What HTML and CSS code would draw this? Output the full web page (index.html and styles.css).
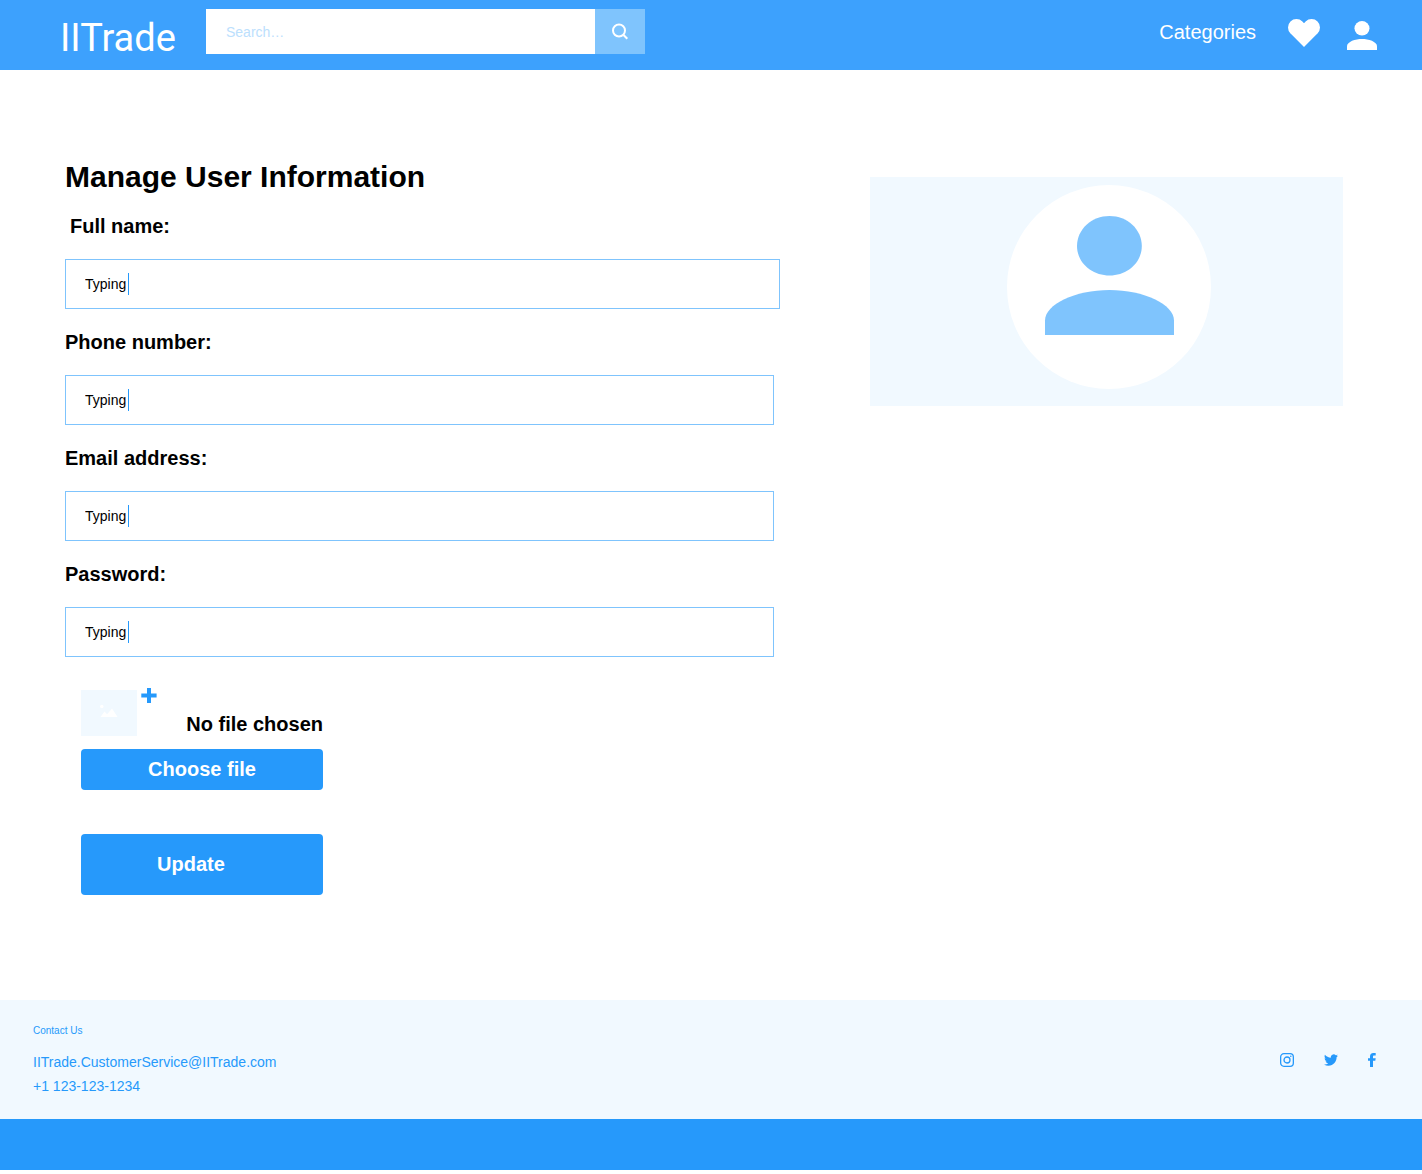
FILE: index.html
```html
<!DOCTYPE html>
<html lang="en">
<head>
<meta charset="utf-8">
<meta name="viewport" content="width=device-width, initial-scale=1">
<title>IITrade</title>
<link rel="stylesheet" href="styles.css">
</head>
<body>
<header class="topbar">
  <a class="logo" href="#">IITrade</a>
  <form class="search">
    <input class="search-input" type="search" placeholder="Search…" aria-label="Search">
    <button class="search-button" type="submit" aria-label="Search">
      <svg width="18" height="18" viewBox="0 0 18 18" fill="none" stroke="#fff" stroke-width="2"><circle cx="8" cy="7.500" r="6"/><path d="M12.300 11.800l4 4"/></svg>
    </button>
  </form>
  <nav class="nav">
    <a class="nav-link" href="#">Categories</a>
    <a class="nav-icon" href="#" aria-label="Favourites">
      <svg width="32" height="31" viewBox="1.55 0.98 20.9 20.25" fill="#fff"><path d="M20.84 4.61a5.5 5.5 0 0 0-7.78 0L12 5.67l-1.06-1.06a5.5 5.5 0 0 0-7.78 7.78l1.06 1.06L12 21.23l7.78-7.78 1.06-1.06a5.5 5.5 0 0 0 0-7.78z"/></svg>
    </a>
    <a class="nav-icon" href="#" aria-label="Account">
      <svg width="30" height="37" viewBox="0 -8 30 37" fill="#fff"><ellipse cx="15" cy="7.3" rx="7.5" ry="7.3"/><path d="M15 18C8.500 18 0 20.500 0 25.300V29h30v-3.700C30 20.500 21.500 18 15 18z"/></svg>
    </a>
  </nav>
</header>

<main class="page">
  <form class="profile">
    <h1 class="title">Manage User Information</h1>
    <div class="field field-wide">
      <label class="label" for="name">Full name:</label>
      <div class="control"><input class="input" id="name" type="text" value="Typing"><span class="caret"></span></div>
    </div>
    <div class="field">
      <label class="label" for="phone">Phone number:</label>
      <div class="control"><input class="input" id="phone" type="text" value="Typing"><span class="caret"></span></div>
    </div>
    <div class="field">
      <label class="label" for="email">Email address:</label>
      <div class="control"><input class="input" id="email" type="text" value="Typing"><span class="caret"></span></div>
    </div>
    <div class="field">
      <label class="label" for="password">Password:</label>
      <div class="control"><input class="input" id="password" type="text" value="Typing"><span class="caret"></span></div>
    </div>
    <div class="upload">
      <div class="upload-row">
        <div class="thumb">
          <svg width="18" height="18" viewBox="0 0 18 18" fill="#fff"><circle cx="1.800" cy="2.500" r="1.700"/><path d="M.5 13l4-5.500 2.600 2.700L12 4.600 17.600 13z"/></svg>
        </div>
        <svg class="plus" width="16" height="15" viewBox="0 0 16 15" fill="#2699fb"><path d="M6 0h4v5.500h5.600v4H10V15H6V9.500H.3v-4H6z"/></svg>
        <span class="file-name">No file chosen</span>
      </div>
      <button class="button" type="button">Choose file</button>
      <button class="button button-update" type="submit">Update</button>
    </div>
  </form>
  <aside class="avatar-card">
    <svg width="204" height="204" viewBox="0 0 204 204" role="img" aria-label="Profile picture"><circle cx="102" cy="102" r="102" fill="#fff"/><g fill="#7fc4fd"><path d="M102.500 31C120.300 31 134.800 44.300 134.800 61S120.300 90.500 102.500 90.500 70 77.700 70 61 84.700 31 102.500 31z"/><path d="M102.500 105C68 105 38 119.500 38 135.500V150h129v-14.500C167 119.500 137 105 102.500 105z"/></g></svg>
  </aside>
</main>

<footer class="footer">
  <div class="contact">
    <p class="contact-title">Contact Us</p>
    <a class="contact-link" href="#">IITrade.CustomerService@IITrade.com</a>
    <a class="contact-link" href="#">+1 123-123-1234</a>
  </div>
  <div class="social">
    <a class="social-link" href="#" aria-label="Instagram">
      <svg width="14" height="14" viewBox="0 0 14 14" fill="none" stroke="#2699fb" stroke-width="1.300"><rect x=".65" y=".65" width="12.700" height="12.700" rx="3.300"/><circle cx="7" cy="7" r="3"/><circle cx="10.800" cy="3.200" r=".8" fill="#2699fb" stroke="none"/></svg>
    </a>
    <a class="social-link" href="#" aria-label="Twitter">
      <svg width="14" height="14" viewBox="0 0 24 24" fill="#2699fb"><path d="M23.954 4.569a10 10 0 0 1-2.825.775 4.958 4.958 0 0 0 2.163-2.723 9.990 9.990 0 0 1-3.127 1.184 4.920 4.920 0 0 0-8.384 4.482C7.691 8.094 4.066 6.130 1.640 3.161a4.822 4.822 0 0 0-.666 2.475c0 1.710.87 3.213 2.188 4.096a4.904 4.904 0 0 1-2.228-.616v.061a4.923 4.923 0 0 0 3.946 4.827 4.996 4.996 0 0 1-2.212.085 4.937 4.937 0 0 0 4.604 3.417 9.868 9.868 0 0 1-6.102 2.105c-.39 0-.779-.023-1.170-.067a13.995 13.995 0 0 0 7.557 2.209c9.054 0 13.999-7.496 13.999-13.986 0-.209 0-.42-.015-.63a9.936 9.936 0 0 0 2.460-2.548z"/></svg>
    </a>
    <a class="social-link" href="#" aria-label="Facebook">
      <svg width="8" height="14" viewBox="0 0 8 14" fill="#2699fb"><path d="M2 14V7.700H0V5.200h2V3.500C2 1.300 3.200 0 5.300 0H7.700v2.400H6.200C5.300 2.400 5 2.800 5 3.600v1.600h2.700L7.300 7.700H5V14z"/></svg>
    </a>
  </div>
</footer>
<div class="bottom-bar"></div>
</body>
</html>
```

FILE: styles.css
```css
* {
  box-sizing: border-box;
}

body {
  margin: 0;
  background: #fff;
  color: #000;
  font-family: "Liberation Sans", Arial, sans-serif;
}

a {
  color: inherit;
  text-decoration: none;
}

svg {
  display: block;
}

.topbar {
  display: flex;
  align-items: flex-start;
  min-height: 70px;
  padding: 9px 45px 0 60px;
  background: #3da1fd;
  color: #fff;
}

.logo {
  flex: 0 0 146px;
  font-family: Roboto, sans-serif;
  font-size: 38px;
  font-weight: 400;
  line-height: 58px;
}

.search {
  display: flex;
  flex: 0 1 439px;
  height: 45px;
}

.search-input {
  flex: 1;
  min-width: 0;
  padding: 0 20px;
  border: 0;
  border-radius: 0;
  background: #fff;
  font: 14px "Liberation Sans", Arial, sans-serif;
  appearance: none;
}

.search-input::placeholder {
  color: #bce0fd;
}

.search-button {
  display: grid;
  place-items: center;
  width: 50px;
  padding: 0;
  border: 0;
  background: #7fc4fd;
}

.nav {
  display: flex;
  align-items: center;
  height: 45px;
  margin-left: auto;
}

.nav-link {
  margin-right: 32px;
  font-size: 20px;
  line-height: 24px;
}

.nav-icon + .nav-icon {
  margin-left: 27px;
}

.page {
  display: grid;
  grid-template-columns: 715fr 473fr;
  gap: 90px;
  align-items: start;
  padding: 89px 79px 105px 65px;
}

.title {
  margin: 0 0 19px;
  font-size: 30px;
  line-height: 36px;
}

.field {
  display: grid;
  gap: 21px;
  margin: 0 6px 21px 0;
}

.field-wide {
  margin-right: 0;
}

.field-wide .label {
  padding-left: 5px;
}

.label,
.file-name {
  font-size: 20px;
  font-weight: 700;
  line-height: 24px;
}

.control {
  position: relative;
}

.input {
  display: block;
  width: 100%;
  height: 50px;
  padding: 0 19px;
  border: 1px solid #7fc4fd;
  border-radius: 0;
  background: #fff;
  color: #000;
  font: 14px "Liberation Sans", Arial, sans-serif;
}

.caret {
  position: absolute;
  top: 14px;
  left: 63px;
  width: 1px;
  height: 22px;
  background: #2699fb;
}

.upload {
  display: grid;
  width: 242px;
  margin: 31px 0 0 16px;
}

.upload-row {
  display: flex;
  align-items: flex-end;
  height: 48px;
  margin-bottom: 13px;
}

.thumb {
  display: grid;
  place-items: center;
  width: 56px;
  height: 46px;
  background: #f1f9ff;
}

.plus {
  align-self: flex-start;
  margin-left: 4px;
}

.file-name {
  margin-left: auto;
}

.button {
  height: 41px;
  padding: 0;
  border: 0;
  border-radius: 4px;
  background: #2699fb;
  color: #fff;
  font: 700 20px "Liberation Sans", Arial, sans-serif;
}

.button-update {
  height: 61px;
  margin-top: 44px;
  padding-right: 22px;
}

.avatar-card {
  display: flex;
  justify-content: center;
  margin-top: 18px;
  padding: 8px 0 17px 5px;
  background: #f1f9ff;
}

.footer {
  display: flex;
  align-items: center;
  justify-content: space-between;
  padding: 22px 46px 21px 33px;
  background: #f1f9ff;
  color: #2699fb;
}

.contact {
  display: grid;
}

.contact-title {
  margin: 0 0 10px;
  font-size: 10px;
  line-height: 18px;
}

.contact-link {
  font-size: 14px;
  line-height: 24px;
}

.social {
  display: flex;
  gap: 30px;
}

.bottom-bar {
  height: 51px;
  background: #2699fb;
}
```
